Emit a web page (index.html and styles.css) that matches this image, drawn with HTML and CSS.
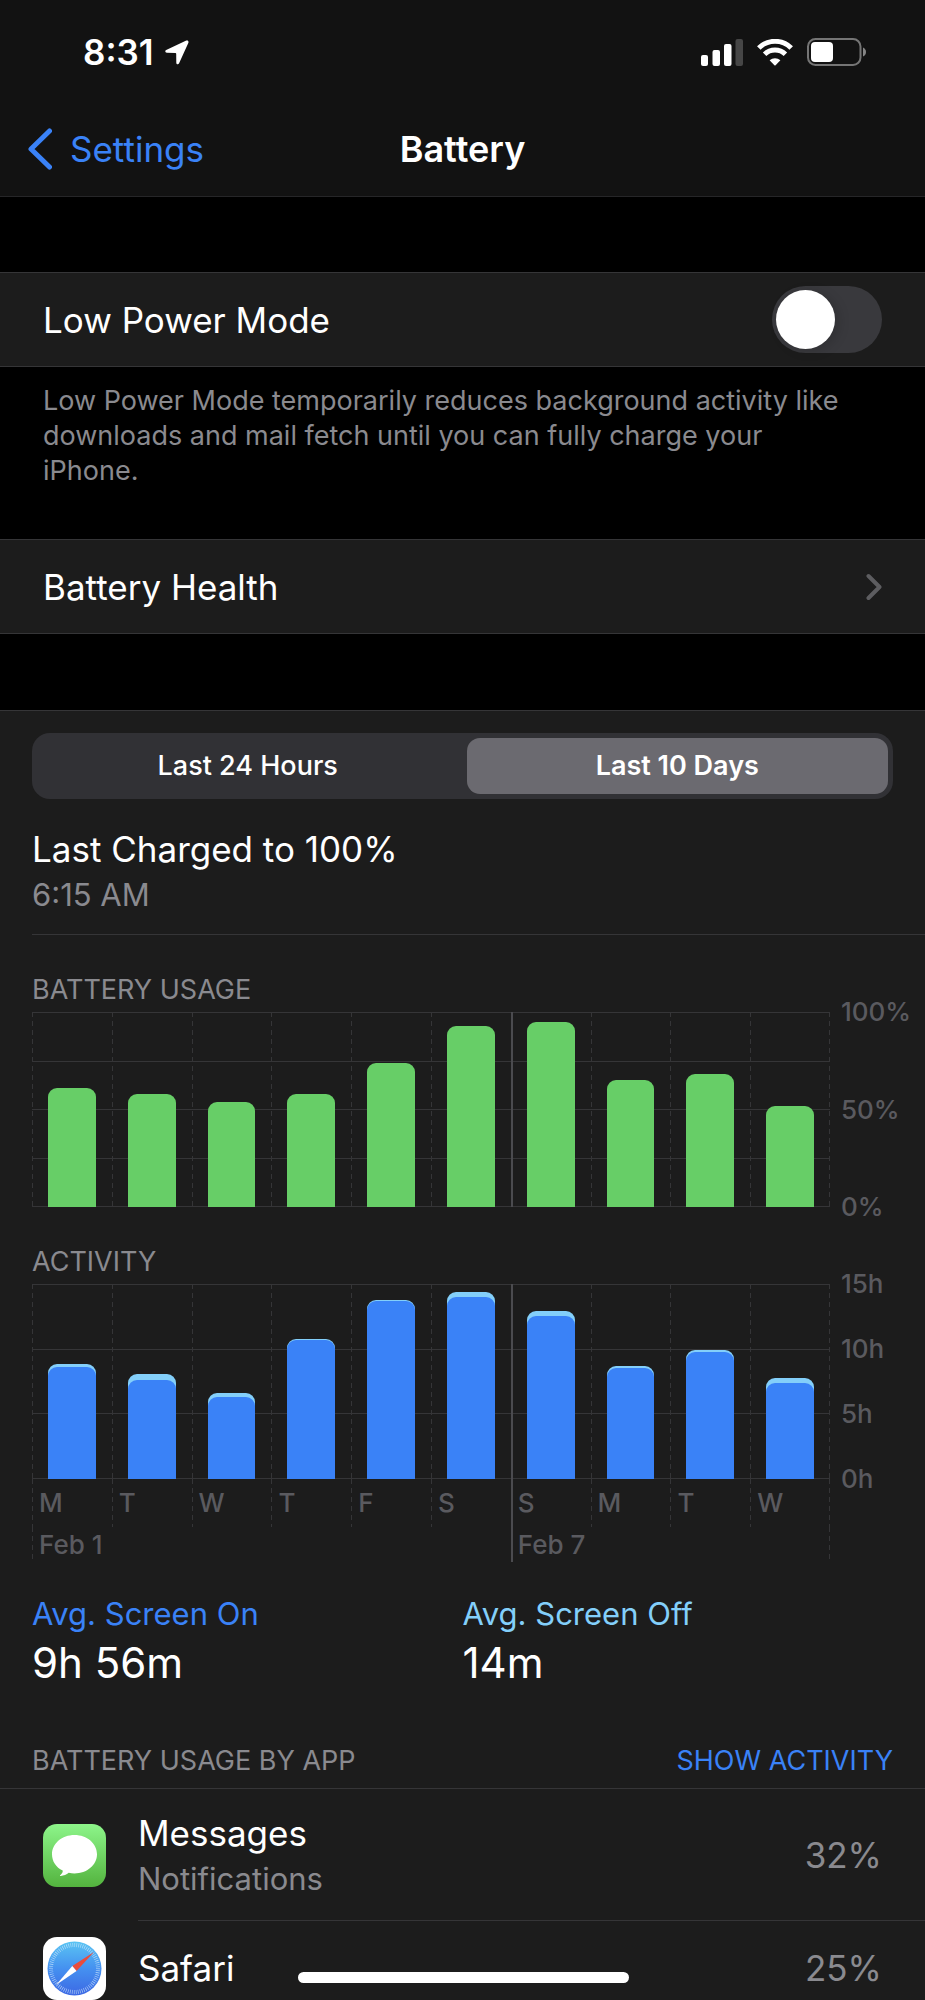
FILE: index.html
```html
<!DOCTYPE html>
<html lang="en">
<head>
<meta charset="utf-8">
<meta name="viewport" content="width=device-width, initial-scale=1">
<title>Battery</title>
<link rel="stylesheet" href="styles.css">
</head>
<body>
<header class="top">
  <div class="status">
    <div class="clock">
      <span>8:31</span>
      <svg width="24" height="25" viewBox="0 0 24 25" aria-hidden="true"><path d="M21.300 .6 1.200 9.900C-.2 10.600 0 12.700 1.800 12.800L10.400 13Q11.200 13 11.200 13.800L11.300 22.700C11.400 24.600 13.300 24.900 14.100 23.300L23.300 2.900C24 1.200 22.900-.1 21.300 .6Z" fill="#fff"/></svg>
    </div>
    <div class="indicators">
      <svg width="42" height="27" viewBox="0 0 42 27" aria-hidden="true"><g fill="#fff"><rect y="16" width="7" height="11" rx="2"/><rect x="11.500" y="11" width="7.500" height="16" rx="2"/><rect x="23" y="5" width="7.500" height="22" rx="2"/></g><rect x="34.500" width="7.500" height="27" rx="2" fill="#464646"/></svg>
      <svg width="36" height="27" viewBox="0 0 36 27" aria-hidden="true"><g fill="none" stroke="#fff" stroke-width="5"><path d="M1.800 9A23 23 0 0 1 34.200 9"/><path d="M7.600 15.300A15 15 0 0 1 28.400 15.300"/></g><path d="M12.600 21.300A8 8 0 0 1 23.400 21.300L18.600 26.300Q18 26.900 17.400 26.300Z" fill="#fff"/></svg>
      <svg width="60" height="28" viewBox="0 0 60 28" aria-hidden="true"><rect x="1" y="1" width="52.500" height="26" rx="7.500" fill="none" stroke="#757575" stroke-width="2"/><rect x="4" y="4" width="22" height="20" rx="4" fill="#fff"/><path d="M56 9.500Q59 11 59 14T56 18.500Z" fill="#858585"/></svg>
    </div>
  </div>
  <nav class="nav">
    <a class="back" href="#">
      <svg width="24" height="42" viewBox="0 0 24 42" aria-hidden="true"><path d="M21.500 3 3 21 21.500 39" fill="none" stroke="currentColor" stroke-width="5" stroke-linecap="round" stroke-linejoin="round"/></svg>
      <span>Settings</span>
    </a>
    <h1 class="title">Battery</h1>
  </nav>
</header>
<main>
  <label class="row" for="lpm"><span>Low Power Mode</span><input class="switch" id="lpm" type="checkbox" role="switch"></label>
  <p class="note">Low Power Mode temporarily reduces background activity like downloads and mail fetch until you can fully charge your iPhone.</p>
  <a class="row" href="#"><span>Battery Health</span>
    <svg width="16" height="28" viewBox="0 0 16 28" aria-hidden="true"><path d="M2.500 3 13.500 14 2.500 25" fill="none" stroke="#5d5d60" stroke-width="4" stroke-linecap="round" stroke-linejoin="round"/></svg>
  </a>

  <section class="panel">
    <div class="segments">
      <label class="segment"><input type="radio" name="range"><span>Last 24 Hours</span></label>
      <label class="segment"><input type="radio" name="range" checked><span>Last 10 Days</span></label>
    </div>
    <div class="charged">
      <h2 class="charged-title">Last Charged to 100%</h2>
      <p class="secondary">6:15 AM</p>
    </div>

    <h3 class="caption chart-title">BATTERY USAGE</h3>
    <div class="chart">
      <div class="plot quarters">
        <div class="day"><div class="bar level" style="height:61%"></div></div>
        <div class="day"><div class="bar level" style="height:58%"></div></div>
        <div class="day"><div class="bar level" style="height:54%"></div></div>
        <div class="day"><div class="bar level" style="height:58%"></div></div>
        <div class="day"><div class="bar level" style="height:74%"></div></div>
        <div class="day"><div class="bar level" style="height:93%"></div></div>
        <div class="day week"><div class="bar level" style="height:95%"></div></div>
        <div class="day"><div class="bar level" style="height:65%"></div></div>
        <div class="day"><div class="bar level" style="height:68%"></div></div>
        <div class="day"><div class="bar level" style="height:52%"></div></div>
      </div>
      <div class="axis"><span>100%</span><span>50%</span><span>0%</span></div>
    </div>

    <h3 class="caption chart-title">ACTIVITY</h3>
    <div class="chart">
      <div class="plot thirds">
        <div class="day"><div class="bar off" style="height:59%"><div class="bar-on" style="height:97%"></div></div></div>
        <div class="day"><div class="bar off" style="height:54%"><div class="bar-on" style="height:94%"></div></div></div>
        <div class="day"><div class="bar off" style="height:44%"><div class="bar-on" style="height:96%"></div></div></div>
        <div class="day"><div class="bar off" style="height:72%"><div class="bar-on" style="height:99%"></div></div></div>
        <div class="day"><div class="bar off" style="height:92%"><div class="bar-on" style="height:99.500%"></div></div></div>
        <div class="day"><div class="bar off" style="height:96%"><div class="bar-on" style="height:97%"></div></div></div>
        <div class="day week"><div class="bar off" style="height:86%"><div class="bar-on" style="height:97%"></div></div></div>
        <div class="day"><div class="bar off" style="height:58%"><div class="bar-on" style="height:98%"></div></div></div>
        <div class="day"><div class="bar off" style="height:66%"><div class="bar-on" style="height:99%"></div></div></div>
        <div class="day"><div class="bar off" style="height:52%"><div class="bar-on" style="height:95%"></div></div></div>
      </div>
      <div class="axis"><span>15h</span><span>10h</span><span>5h</span><span>0h</span></div>
      <div class="names">
        <span>M</span><span>T</span><span>W</span><span>T</span><span>F</span><span>S</span><span class="week">S</span><span>M</span><span>T</span><span>W</span>
      </div>
      <div class="dates"><span>Feb 1</span><span class="week">Feb 7</span></div>
    </div>

    <dl class="averages">
      <div><dt class="screen-on">Avg. Screen On</dt><dd>9h 56m</dd></div>
      <div><dt class="screen-off">Avg. Screen Off</dt><dd>14m</dd></div>
    </dl>

    <div class="apps-head">
      <h3 class="caption">BATTERY USAGE BY APP</h3>
      <button class="show" type="button">SHOW ACTIVITY</button>
    </div>
    <ul class="apps">
      <li class="app">
        <svg class="icon" viewBox="0 0 63 63" aria-hidden="true"><defs><linearGradient id="msg" x1="0" y1="0" x2="0" y2="1"><stop offset="0" stop-color="#8df58a"/><stop offset="1" stop-color="#53b33e"/></linearGradient></defs><rect width="63" height="63" rx="14" fill="url(#msg)"/><path d="M31.500 11C44 11 54 19.500 54 30.200S44 49.400 31.500 49.400Q28.500 49.400 25.700 48.800C23.500 50.500 20.500 52 17.500 51.900C16.900 51.900 16.800 51.500 17.200 51.200C18.900 49.800 20 48.300 19.700 46.600C13 43.200 9 37.300 9 30.200 9 19.500 19 11 31.500 11Z" fill="#fff"/></svg>
        <div class="app-body">
          <div><h4 class="app-name">Messages</h4><p class="secondary app-detail">Notifications</p></div>
          <span class="share">32%</span>
        </div>
      </li>
      <li class="app last">
        <svg class="icon" viewBox="0 0 63 63" aria-hidden="true"><defs><linearGradient id="saf" x1="0" y1="0" x2="0" y2="1"><stop offset="0" stop-color="#5ac4f3"/><stop offset=".5" stop-color="#4591f0"/><stop offset="1" stop-color="#3c68e4"/></linearGradient></defs><rect width="63" height="63" rx="14" fill="#fff"/><circle cx="31.500" cy="31.500" r="27" fill="url(#saf)"/><circle cx="31.500" cy="31.500" r="23.500" fill="none" stroke="#d6ecfc" stroke-width="4" pathLength="144" stroke-dasharray=".6 1.400" opacity=".8"/><path d="M51 15 29.300 29 33.500 34Z" fill="#ea4c3c"/><path d="M29.300 29 33.500 34 13 48Z" fill="#fff"/></svg>
        <div class="app-body"><h4 class="app-name">Safari</h4><span class="share">25%</span></div>
      </li>
    </ul>
  </section>
</main>
<div class="home-bar"></div>
</body>
</html>
```

FILE: styles.css
```css
:root {
  --text: #fff;
  --muted: #8a8a8f;
  --axis: #5a5a5f;
  --line: #353537;
  --cell: #1c1c1c;
  --blue: #3a82f7;
  --sky: #83cffa;
  --green: #67ce67;
}

* { box-sizing: border-box; }

body {
  margin: 0;
  background: #000;
  color: var(--text);
  font-family: Inter, "Liberation Sans", sans-serif;
  font-size: 35px;
  line-height: 44px;
}

h1, h2, h3, h4, p, dl, dd, ul { margin: 0; padding: 0; font: inherit; }
ul { list-style: none; }
a { color: inherit; text-decoration: none; }
button { padding: 0; border: 0; background: none; font: inherit; color: inherit; }
svg { display: block; flex: none; }

/* Status bar and navigation */
.top { background: #121212; border-bottom: 1px solid #262628; }
.status {
  display: flex;
  justify-content: space-between;
  align-items: center;
  height: 104px;
  padding: 0 58px 0 83px;
}
.clock { display: flex; align-items: center; gap: 11px; font-weight: 600; }
.indicators { display: flex; align-items: center; gap: 14px; }
.nav {
  display: grid;
  grid-template-columns: 1fr auto 1fr;
  align-items: center;
  height: 92px;
  padding: 0 28px 2px;
}
.back { display: flex; align-items: center; gap: 18px; color: var(--blue); }
.title { font-size: 36px; font-weight: 600; }

/* Settings rows */
.row {
  display: flex;
  justify-content: space-between;
  align-items: center;
  height: 95px;
  margin-top: 75px;
  padding: 0 43px;
  background: var(--cell);
  border-block: 1px solid var(--line);
}
.note {
  padding: 16px 72px 0 43px;
  color: var(--muted);
  font-size: 27px;
  line-height: 35px;
}
.note + .row { margin-top: 51px; }
.switch {
  appearance: none;
  display: flex;
  width: 110px;
  height: 67px;
  margin: 0;
  padding: 4px;
  border-radius: 34px;
  background: #39393d;
}
.switch::before {
  content: "";
  width: 59px;
  height: 59px;
  border-radius: 50%;
  background: #fff;
  box-shadow: 4px 2px 12px rgba(0, 0, 0, .15);
}
.switch:checked { justify-content: flex-end; background: var(--green); }

/* Usage panel */
.panel {
  margin-top: 76px;
  padding-top: 22px;
  background: var(--cell);
  border-top: 1px solid var(--line);
}
.segments {
  display: grid;
  grid-template-columns: 1fr 1fr;
  column-gap: 8px;
  margin: 0 32px;
  padding: 5px;
  border-radius: 18px;
  background: #313135;
}
.segment { display: grid; }
.segment input { appearance: none; grid-area: 1 / 1; margin: 0; border-radius: 13px; }
.segment input:checked { background: #6b6a70; }
.segment span {
  grid-area: 1 / 1;
  text-align: center;
  font-size: 27px;
  font-weight: 500;
  line-height: 56px;
}
.segment input:checked + span { font-weight: 600; }
.charged {
  margin-left: 32px;
  padding: 28px 0 19px;
  border-bottom: 1px solid var(--line);
}
.secondary { margin-top: 4px; color: var(--muted); font-size: 31px; line-height: 40px; }
.caption { color: var(--muted); font-size: 27px; line-height: 34px; }
.chart-title { margin: 38px 32px 5px; }

/* Charts */
.chart { display: grid; grid-template-columns: 1fr 95px; margin-left: 32px; }
.plot, .names, .dates { --edge: repeating-linear-gradient(var(--line) 0 5px, transparent 5px 9px) 100% 0 / 1px 100% no-repeat; }
.plot {
  --rule: linear-gradient(var(--line), var(--line));
  display: grid;
  grid-template-columns: repeat(10, 1fr);
  height: 195px;
}
.quarters {
  background:
    var(--rule) 0 0 / 100% 1px no-repeat,
    var(--rule) 0 25% / 100% 1px no-repeat,
    var(--rule) 0 50% / 100% 1px no-repeat,
    var(--rule) 0 75% / 100% 1px no-repeat,
    var(--rule) 0 100% / 100% 1px no-repeat,
    var(--edge);
}
.thirds {
  background:
    var(--rule) 0 0 / 100% 1px no-repeat,
    var(--rule) 0 33.33% / 100% 1px no-repeat,
    var(--rule) 0 66.67% / 100% 1px no-repeat,
    var(--rule) 0 100% / 100% 1px no-repeat,
    var(--edge);
}
.day, .names span, .dates span {
  background: repeating-linear-gradient(var(--line) 0 5px, transparent 5px 9px) 0 0 / 1px 100% no-repeat;
}
.day.week, .names .week, .dates .week {
  background: linear-gradient(#4b4b4f, #4b4b4f) 0 0 / 2px 100% no-repeat;
}
.day { display: flex; justify-content: center; align-items: flex-end; }
.bar {
  display: flex;
  align-items: flex-end;
  width: 60%;
  border-radius: 9px 9px 0 0;
  overflow: hidden;
}
.level { background: var(--green); }
.off { background: var(--sky); }
.bar-on { width: 100%; border-radius: 9px 9px 0 0; background: var(--blue); }
.axis {
  display: flex;
  flex-direction: column;
  justify-content: space-between;
  margin: -15px 0;
  padding-left: 11px;
}
.axis, .names, .dates { color: var(--axis); font-size: 26px; font-weight: 500; line-height: 30px; }
.names, .dates { grid-column: 1; display: grid; background: var(--edge); }
.names { grid-template-columns: repeat(10, 1fr); line-height: 48px; }
.dates { grid-template-columns: 6fr 4fr; line-height: 35px; }
.names span, .dates span { padding-left: 7px; }

/* Averages */
.averages { display: grid; grid-template-columns: 1fr 1fr; margin: 32px 32px 0; }
.averages dt { font-size: 31px; line-height: 40px; }
.averages dd { margin-top: 4px; font-size: 42px; line-height: 50px; }
.screen-on { color: var(--blue); }
.screen-off { color: var(--sky); }

/* App list */
.apps-head {
  display: flex;
  justify-content: space-between;
  padding: 56px 32px 10px;
  border-bottom: 1px solid var(--line);
}
.show { color: var(--blue); font-size: 27px; line-height: 34px; }
.app { display: flex; align-items: center; gap: 32px; padding-left: 43px; }
.icon { width: 63px; height: 63px; }
.app-body {
  display: flex;
  flex: 1;
  justify-content: space-between;
  align-items: center;
  height: 132px;
  padding-right: 43px;
  border-bottom: 1px solid var(--line);
}
.share { color: var(--muted); }
.last { padding-top: 15px; }
.last .app-body { height: 64px; border: 0; }

.home-bar {
  position: fixed;
  bottom: 17px;
  left: 50%;
  width: 331px;
  height: 11px;
  margin-left: -165px;
  border-radius: 6px;
  background: #fff;
}
```
